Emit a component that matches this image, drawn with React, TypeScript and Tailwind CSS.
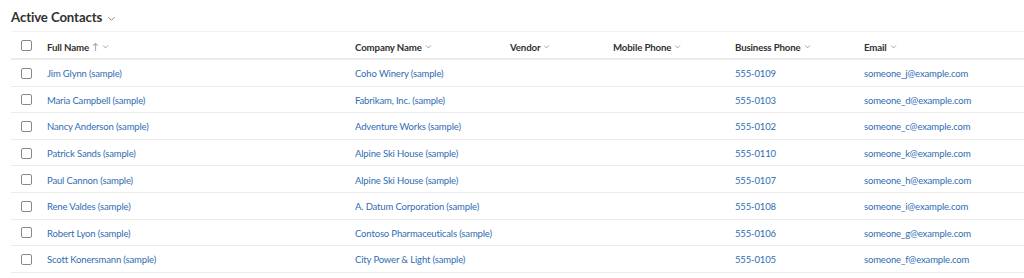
import React from "react";

const rows = [
  ["Jim Glynn (sample)", "Coho Winery (sample)", "555-0109", "someone_j@example.com"],
  ["Maria Campbell (sample)", "Fabrikam, Inc. (sample)", "555-0103", "someone_d@example.com"],
  ["Nancy Anderson (sample)", "Adventure Works (sample)", "555-0102", "someone_c@example.com"],
  ["Patrick Sands (sample)", "Alpine Ski House (sample)", "555-0110", "someone_k@example.com"],
  ["Paul Cannon (sample)", "Alpine Ski House (sample)", "555-0107", "someone_h@example.com"],
  ["Rene Valdes (sample)", "A. Datum Corporation (sample)", "555-0108", "someone_i@example.com"],
  ["Robert Lyon (sample)", "Contoso Pharmaceuticals (sample)", "555-0106", "someone_g@example.com"],
  ["Scott Konersmann (sample)", "City Power & Light (sample)", "555-0105", "someone_f@example.com"],
];

const Chevron = ({ cls = "w-[7px] h-[7px]" }: { cls?: string }) => (
  <svg viewBox="0 0 10 10" className={cls} fill="none" stroke="#8a8886" strokeWidth="1.1">
    <path d="M1.5 3.5 L5 7 L8.5 3.5" />
  </svg>
);

const Box = () => (
  <div className="w-[11px] h-[11px] rounded-[2px] border border-[#8a8886] bg-white" />
);

const grid = "grid grid-cols-[36px_308px_155px_103px_122px_129px_1fr] items-center whitespace-nowrap";

export default function App() {
  return (
    <div className="w-[1024px] h-[278px] bg-white overflow-hidden" style={{ fontFamily: 'Lato, "Noto Sans", sans-serif' }}>
      <div className="h-[31px] flex items-center pl-[11px] gap-[5px] pt-[4px]">
        <span className="text-[13.2px] font-bold text-[#323130] tracking-[-0.1px]">Active Contacts</span>
        <Chevron cls="w-[9px] h-[9px] mt-[2px]" />
      </div>
      <div className="ml-[11px] border-t border-[#f3f2f1]">
        <div className={`${grid} h-[28px] border-b-2 border-[#edebe9] text-[9.7px] tracking-[-0.15px] font-bold text-[#323130] pt-[4px]`}>
          <div className="pl-[10px] -mt-[3px]"><Box /></div>
          <div className="flex items-center gap-[3px]">
            <span>Full Name</span>
            <span className="text-[9px] font-normal text-[#8a8886] leading-none">↑</span>
            <Chevron />
          </div>
          <div className="flex items-center gap-[3px]"><span>Company Name</span><Chevron /></div>
          <div className="flex items-center gap-[3px]"><span>Vendor</span><Chevron /></div>
          <div className="flex items-center gap-[3px]"><span>Mobile Phone</span><Chevron /></div>
          <div className="flex items-center gap-[3px]"><span>Business Phone</span><Chevron /></div>
          <div className="flex items-center gap-[3px]"><span>Email</span><Chevron /></div>
        </div>
        {rows.map((r, i) => (
          <div key={i} className={`${grid} h-[26.6px] border-b border-[#edebe9] text-[9.5px] tracking-[-0.15px] text-[#2f6db3] pt-[3px]`}>
            <div className="pl-[10px] -mt-[2px]"><Box /></div>
            <div>{r[0]}</div>
            <div>{r[1]}</div>
            <div></div>
            <div></div>
            <div>{r[2]}</div>
            <div>{r[3]}</div>
          </div>
        ))}
      </div>
    </div>
  );
}
